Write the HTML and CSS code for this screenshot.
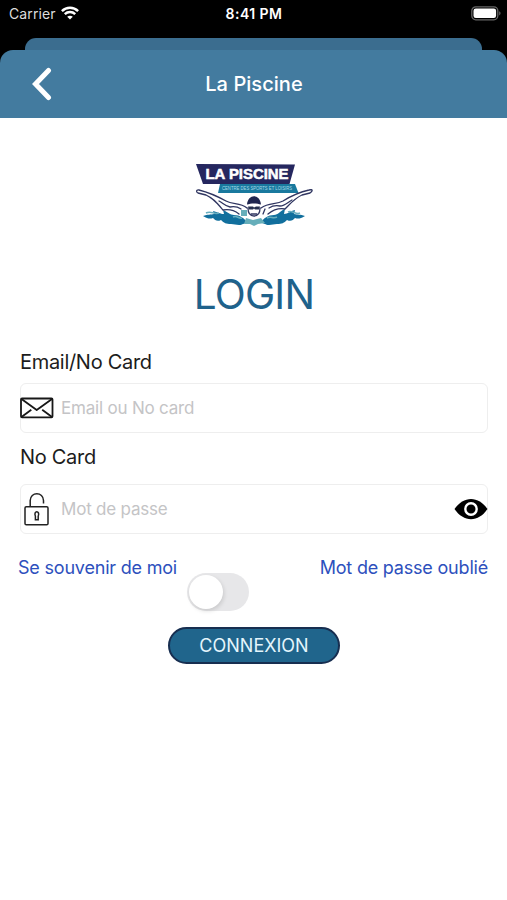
FILE: index.html
```html
<!DOCTYPE html>
<html lang="fr">
<head>
<meta charset="utf-8">
<title>La Piscine</title>
<link rel="stylesheet" href="styles.css">
</head>
<body>
<div class="status">
  <div class="carrier"><span>Carrier</span>
    <svg width="18" height="14" viewBox="0 0 18 14" fill="none" stroke="#fff" stroke-width="2.500"><path d="M.9 5.1C5.500.7 12.500.7 17.100 5.100M3.800 8.200c3-2.800 7.400-2.800 10.400 0"/><path d="M9 13.600 6.200 10.800c1.600-1.500 4-1.500 5.600 0z" fill="#fff" stroke="none"/></svg>
  </div>
  <div class="time">8:41 PM</div>
  <svg class="battery" width="30" height="15" viewBox="0 0 30 15"><rect x=".8" y=".8" width="26" height="13" rx="4" fill="none" stroke="#666" stroke-width="1.300"/><rect x="2.500" y="2.500" width="22.600" height="9.600" rx="2.300" fill="#fff"/><path d="M28.200 5.200c1.800.7 1.800 3.500 0 4.200z" fill="#666"/></svg>
</div>
<div class="backsheet"></div>
<header class="nav">
  <svg class="back" width="22" height="34" viewBox="0 0 22 34" fill="none" stroke="#fff" stroke-width="5" stroke-linecap="round"><path d="M18.500 3.500 5.500 17l13 13.500"/></svg>
  <h1>La Piscine</h1>
</header>
<main>
  <svg class="logo" width="120" height="66" viewBox="0 0 120 66">
    <path d="M1 2 100 2.500 94.500 22H8z" fill="#25275f"/>
    <path d="M25 22h75l3.500 9H23z" fill="#19799e"/>
    <text class="logo-name" x="10.500" y="17.400" textLength="83" lengthAdjust="spacingAndGlyphs">LA PISCINE</text>
    <text class="logo-tag" x="27" y="28.400" textLength="70" lengthAdjust="spacingAndGlyphs">CENTRE DES SPORTS ET LOISIRS</text>
    <path d="M8 54c5-2 7-1 11-2l-1-3c5 1 7 3 11 3l-1-4c5 2 7 5 11 5 6 0 10 3 14 8-5 0-5 2-9 2-3 0-5-1-8-1-5 0-7-1-10-4-4 2-6 0-8-2-3 1-5 1-10-2zM110 54c-5-2-7-1-11-2l1-4c-5 1-7 4-11 4l1-5c-5 2-7 6-11 6-6 0-10 3-14 8 5 0 5 2 9 2 3 0 5-1 8-1 5 0 7-1 10-4 4 2 6 0 8-2 3 1 5 1 10-2z" fill="#116f9d"/>
    <path d="M11 51c5-3 8 2 13 0M105 51c-4 2-8-3-12-1M38 55c4-2 5 2 9 1M72 56c4-2 6 1 10-1" fill="none" stroke="#68aebf" stroke-width="1.500"/>
    <path d="M46 48h6v6h-6zM51 56l7 2 8-2 4 5-7 1-4 2-4-2-6 0z" fill="#66aeba"/>
    <g fill="none" stroke="#303661" stroke-width="1.300" stroke-linecap="round" stroke-linejoin="round">
      <path d="M52 46c-7-6-14-3-21-7C20 33 12 30 4 28c-3-.5-3 2-1 3l8 2c7 3 11 8 17 15 6-1 11 0 16 4M66 46c8-6 15-3 22-7 8-5 17-9 26-11 4-1 4 1 1 3l-8 2c-7 3-11 8-17 14-6-1-12 1-17 5"/>
      <path d="M24 39c4 2 6 5 11 6 5-1 8 0 11 2M97 38c-4 2-7 6-12 6-5-1-8 0-11 2M53 46c0 5 2 8 6 8s6-3 6-8M70 47l-2 5M56 52h6"/>
    </g>
    <path d="M52 42.500c1-11 13-11 14 0-4-1.500-10-1.500-14 0z" fill="#20264f"/>
    <path d="M53 44.500h5l1 1 2-1h4l-1 3h-4l-1-1-1 1h-4z" fill="#26304e"/>
  </svg>
  <h2>LOGIN</h2>
  <div class="label label-email">Email/No Card</div>
  <div class="field">
    <svg width="34" height="22" viewBox="0 0 34 22" fill="none" stroke="#181818" stroke-width="1.800" stroke-linejoin="round"><rect x="1" y="1.500" width="31.500" height="18.800" rx="1"/><path d="M1.500 2 16.700 13 32 2M1.500 20l9.800-7.200M32 20l-9.800-7.200"/></svg>
    <span class="hint hint-email">Email ou No card</span>
  </div>
  <div class="label label-card">No Card</div>
  <div class="field">
    <svg class="lock" width="34" height="34" viewBox="0 0 34 34" fill="none" stroke="#222" stroke-width="1.500"><rect x="5" y="14.800" width="23" height="18" rx="1.300"/><path d="M10.200 14.500V8.500c0-9 13.300-9 13.300 0v3"/><path d="M15.400 24.200c-2.400-5.800 5.200-5.800 2.800 0v3.600h-2.800z" stroke-width="1.500"/></svg>
    <span class="hint hint-pass">Mot de passe</span>
    <svg class="eye" width="34" height="22" viewBox="0 0 34 22"><path d="M.5 11C9.500-2.500 24.500-2.500 33.500 11 24.500 24.500 9.500 24.500.5 11z"/><circle cx="17" cy="11" r="5.700" fill="none" stroke="#fff" stroke-width="2.400"/></svg>
  </div>
  <div class="links"><a class="remember">Se souvenir de moi</a><a class="forgot">Mot de passe oublié</a></div>
  <div class="toggle"><div class="knob"></div></div>
  <button><span>CONNEXION</span></button>
</main>
</body>
</html>
```
FILE: styles.css
```css
* { box-sizing: border-box; }
body { margin: 0; width: 507px; height: 900px; overflow: hidden; background: #000; font-family: Inter, "Liberation Sans", sans-serif; display: flex; flex-direction: column; }
svg { display: block; flex: none; }
.status { height: 38px; flex: none; padding: 6px 6px 0 9px; color: #fff; display: grid; grid-template-columns: 1fr auto 1fr; align-items: start; line-height: 16px; }
.carrier { display: flex; gap: 5px; font-size: 14px; letter-spacing: .1px; color: #ddd; }
.time { font-size: 14px; font-weight: 600; letter-spacing: .45px; margin-right: 2px; }
.battery { justify-self: end; }
.backsheet { height: 12px; flex: none; margin: 0 25px; background: #3b6d8f; border-radius: 11px 11px 0 0; }
.nav { height: 68px; flex: none; background: #437b9f; border-radius: 13px 13px 0 0; display: grid; grid-template-columns: 1fr auto 1fr; align-items: center; padding: 0 29px 0 30px; }
.nav h1 { margin: 0; color: #fff; font-size: 20px; font-weight: 500; letter-spacing: .05px; line-height: 24px; }
main { flex: 1; background: #fff; padding: 44px 19px 0 20px; display: flex; flex-direction: column; }
.logo { margin: 0 0 0 175px; }
.logo-name { font: 900 14px "Liberation Sans", sans-serif; fill: #fff; stroke: #fff; stroke-width: .5px; }
.logo-tag { font: 5.5px "Liberation Sans", sans-serif; fill: #a7d9e9; }
h2 { margin: 42px 0 0; text-align: center; color: #1f628b; font-size: 40.5px; letter-spacing: -.8px; line-height: 50px; font-weight: 400; }
.label { font-size: 20px; letter-spacing: -.3px; line-height: 24px; color: #1c1c1c; white-space: nowrap; }
.label-email { margin: 30px 0 9px; }
.label-card { margin: 12px 0 15px; }
.field { height: 50px; border: 1px solid #eee; border-radius: 6px; display: flex; align-items: center; }
.field > svg:first-child { margin-left: -1px; }
.hint { margin-left: 7px; flex: 1; color: #c4c4c6; font-size: 17px; letter-spacing: -.2px; line-height: 22px; }
.eye { margin-right: -1px; }
.links { margin: 23px 0 0 -2px; display: flex; justify-content: space-between; color: #2d50bd; font-size: 18px; letter-spacing: -.2px; line-height: 22px; white-space: nowrap; }
.toggle { width: 62px; height: 38px; margin: -6px 0 0 167px; flex: none; border-radius: 19px; background: #e7e7e9; padding: 2px; }
.knob { width: 34px; height: 34px; border-radius: 50%; background: #fff; box-shadow: 1px 2px 4px #0002; }
button { width: 172px; height: 37px; margin: 16px 0 0 148px; padding: 0; border: 2px solid #172e50; border-radius: 19px; background: #20658c; color: #e4f5fc; font: 18px/22px Inter, sans-serif; }
```
